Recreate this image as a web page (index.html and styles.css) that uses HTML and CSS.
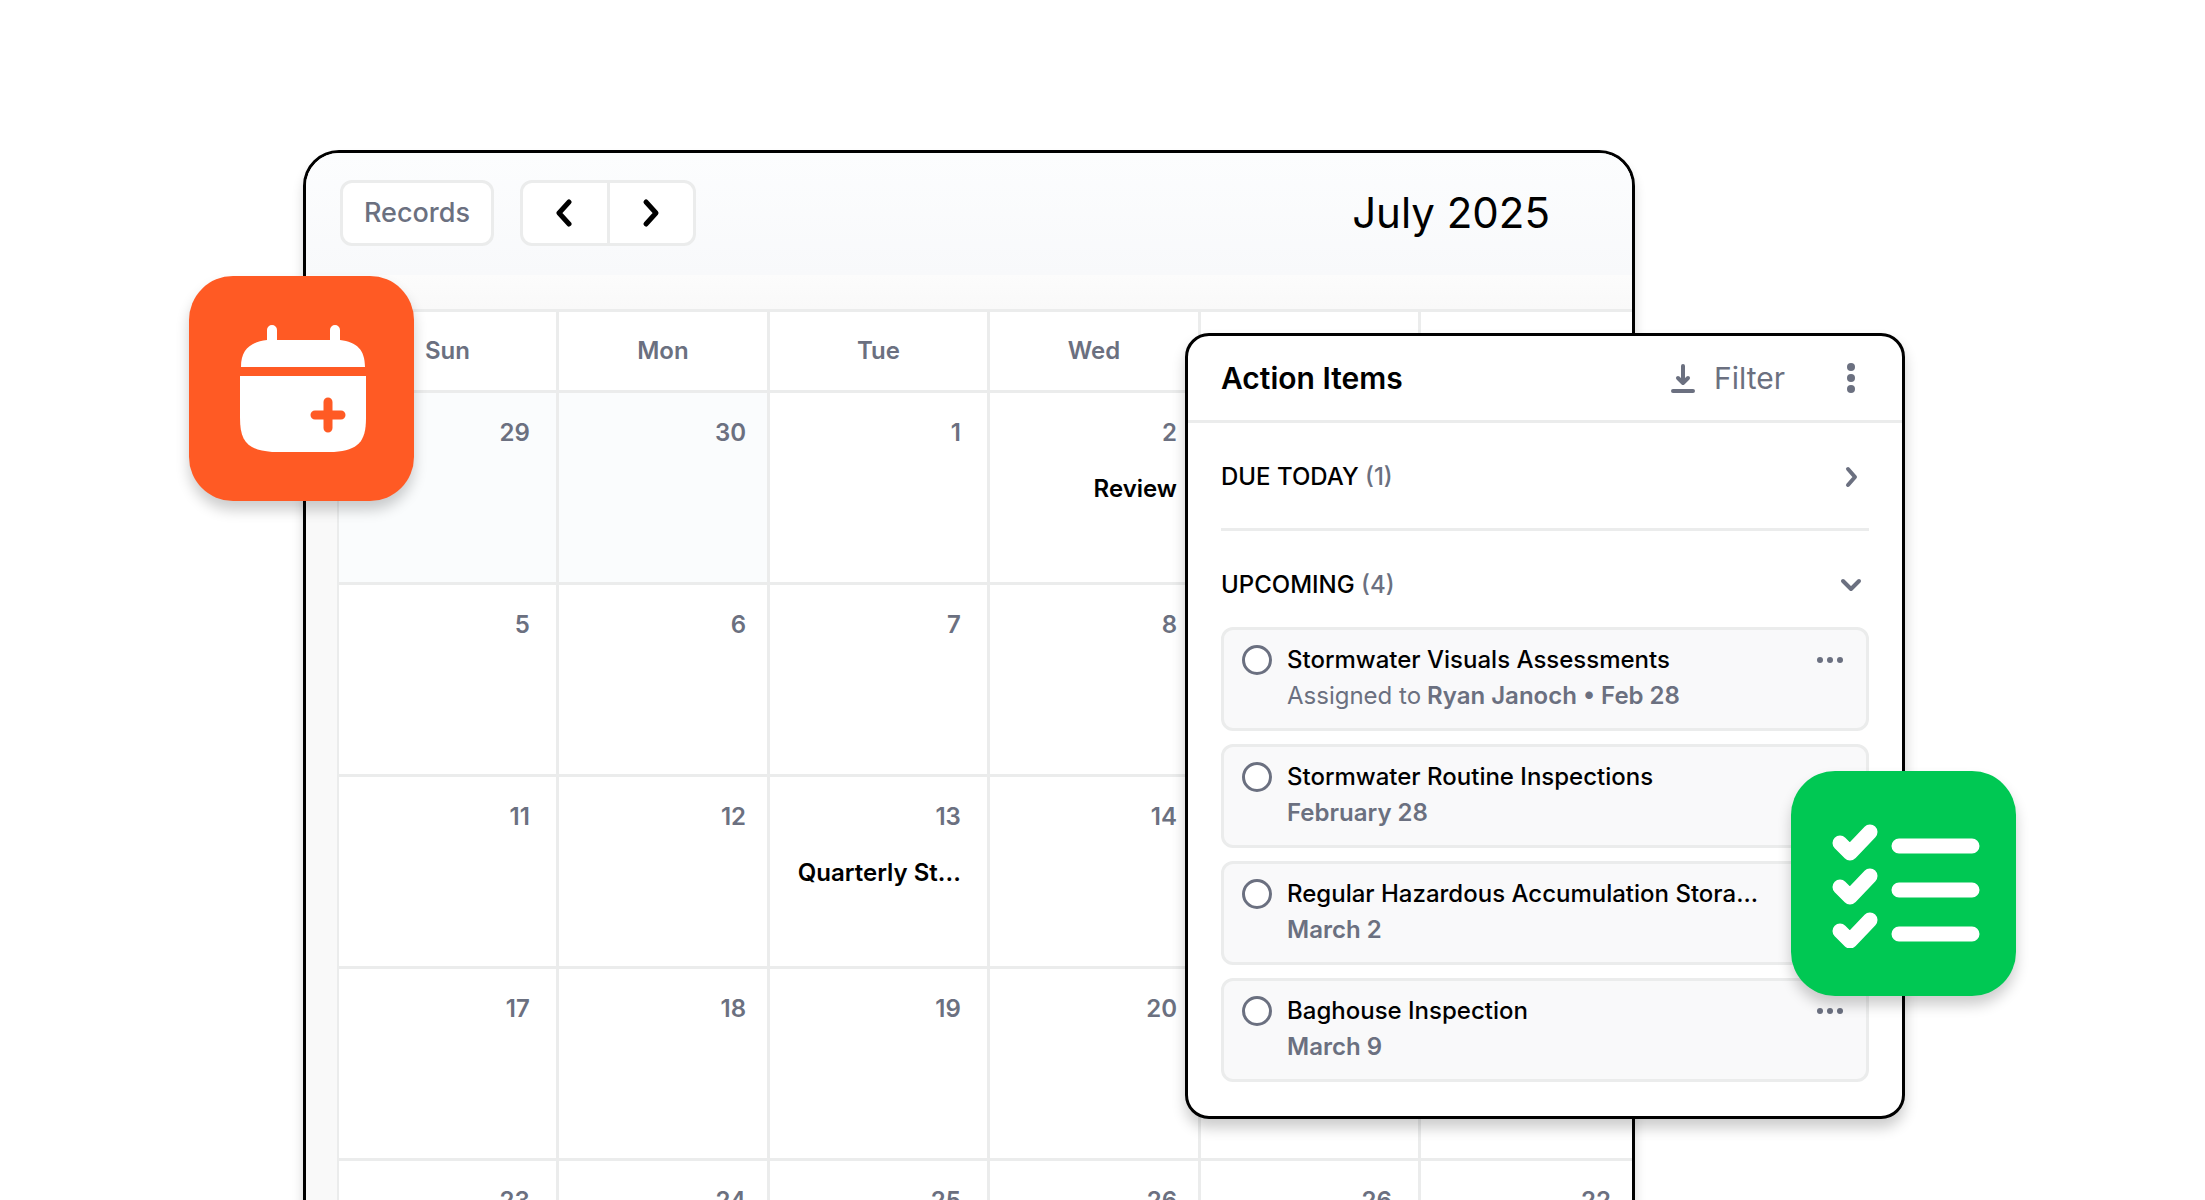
FILE: index.html
```html
<!DOCTYPE html>
<html lang="en">
<head>
<meta charset="utf-8">
<meta name="viewport" content="width=device-width, initial-scale=1">
<title>Calendar and action items</title>
<link rel="stylesheet" href="styles.css">
</head>
<body>
<main class="stage">
  <section class="calendar" aria-label="Calendar">
    <header class="calendar-bar">
      <button class="btn" type="button">Records</button>
      <div class="pager">
        <button class="pager-btn" type="button" aria-label="Previous month">
          <svg width="18" height="30" viewBox="0 0 18 30"><path d="M13 4 3 15l10 11"/></svg>
        </button>
        <button class="pager-btn" type="button" aria-label="Next month">
          <svg width="18" height="30" viewBox="0 0 18 30"><path d="m4 4 10 11L4 26"/></svg>
        </button>
      </div>
      <h1 class="month">July 2025</h1>
    </header>
    <div class="calendar-body">
      <table class="grid">
        <colgroup><col class="col-wide"><col class="col"><col class="col-wide"><col class="col"><col class="col-wide"><col class="col"></colgroup>
        <thead>
          <tr><th>Sun</th><th>Mon</th><th>Tue</th><th>Wed</th><td></td><td></td></tr>
        </thead>
        <tbody>
          <tr><td class="muted">29</td><td class="muted">30</td><td>1</td><td>2<p class="event">Review</p></td><td></td><td></td></tr>
          <tr><td>5</td><td>6</td><td>7</td><td>8</td><td></td><td></td></tr>
          <tr><td>11</td><td>12</td><td>13<p class="event">Quarterly St...</p></td><td>14</td><td></td><td></td></tr>
          <tr><td>17</td><td>18</td><td>19</td><td>20</td><td></td><td></td></tr>
          <tr><td>23</td><td>24</td><td>25</td><td>26</td><td>26</td><td>22</td></tr>
        </tbody>
      </table>
    </div>
    <div class="badge badge-calendar">
      <svg width="128" height="128" viewBox="0 0 128 128">
        <path fill="#fff" d="M29 15V5a5 5 0 0 1 10 0v10h53V5a5 5 0 0 1 10 0v10c17 2 25 10 25 27H3c0-17 9-25 26-27z"/>
        <path fill="#fff" d="M2 51h126v42c0 24-8 32-32 34H34C10 125 2 117 2 93z"/>
        <path fill="none" stroke="#ff5a24" stroke-width="9" stroke-linecap="round" d="M90 77v26M77 90h26"/>
      </svg>
    </div>
  </section>

  <section class="panel" aria-label="Action Items">
    <header class="panel-head">
      <h2 class="panel-title">Action Items</h2>
      <button class="filter" type="button">
        <svg width="26" height="30" viewBox="0 0 26 30"><path d="M13 3v17M8 15l5 5 5-5M3 28h20"/></svg>
        Filter
      </button>
      <button class="more" type="button" aria-label="More options">
        <svg width="8" height="30" viewBox="0 0 8 30"><circle cx="4" cy="4" r="4"/><circle cx="4" cy="15" r="4"/><circle cx="4" cy="26" r="4"/></svg>
      </button>
    </header>
    <div class="panel-body">
      <button class="group group-closed" type="button" aria-expanded="false">
        <span>DUE TODAY <span class="count">(1)</span></span>
        <svg width="24" height="24" viewBox="0 0 24 24"><path d="m9 4 7 8-7 8"/></svg>
      </button>
      <button class="group" type="button" aria-expanded="true">
        <span>UPCOMING <span class="count">(4)</span></span>
        <svg width="24" height="24" viewBox="0 0 24 24"><path d="m4 8 8 8 8-8"/></svg>
      </button>
      <ul class="items">
        <li class="item">
          <input class="tick" type="radio" id="item-1">
          <label class="item-text" for="item-1">Stormwater Visuals Assessments<span class="meta"><span class="light">Assigned to</span> Ryan Janoch • Feb 28</span></label>
          <button class="dots" type="button" aria-label="Item options"><svg width="26" height="6" viewBox="0 0 26 6"><circle cx="3" cy="3" r="3"/><circle cx="13" cy="3" r="3"/><circle cx="23" cy="3" r="3"/></svg></button>
        </li>
        <li class="item">
          <input class="tick" type="radio" id="item-2">
          <label class="item-text" for="item-2">Stormwater Routine Inspections<span class="meta">February 28</span></label>
        </li>
        <li class="item">
          <input class="tick" type="radio" id="item-3">
          <label class="item-text" for="item-3">Regular Hazardous Accumulation Stora...<span class="meta">March 2</span></label>
        </li>
        <li class="item">
          <input class="tick" type="radio" id="item-4">
          <label class="item-text" for="item-4">Baghouse Inspection<span class="meta">March 9</span></label>
          <button class="dots" type="button" aria-label="Item options"><svg width="26" height="6" viewBox="0 0 26 6"><circle cx="3" cy="3" r="3"/><circle cx="13" cy="3" r="3"/><circle cx="23" cy="3" r="3"/></svg></button>
        </li>
      </ul>
    </div>
    <div class="badge badge-tasks">
      <svg width="152" height="128" viewBox="0 0 152 128" fill="none" stroke="#fff" stroke-width="15" stroke-linecap="round" stroke-linejoin="round">
        <path d="M71 26h73M71 70h73M71 114h73"/>
        <path d="m12 23 10 10 20-21M12 67l10 10 20-21M12 111l10 10 20-21"/>
      </svg>
    </div>
  </section>
</main>
</body>
</html>
```
FILE: styles.css
```css
:root {
  --line: #ebecec;
  --gray: #6b7080;
  --ink: #000;
}

* {
  box-sizing: border-box;
}

body {
  margin: 0;
  background: #fff;
  color: var(--ink);
  font: 500 24px/36px Inter, sans-serif;
}

h1, h2, p, ul {
  margin: 0;
  padding: 0;
}

button {
  margin: 0;
  padding: 0;
  border: 0;
  background: none;
  color: inherit;
  font: inherit;
}

svg {
  display: block;
}

/* The calendar and the panel share one row and overlap across columns. */
.stage {
  display: grid;
  grid-template-columns: minmax(0, 303fr) minmax(0, 882fr) minmax(0, 450fr) minmax(0, 270fr) minmax(0, 300fr);
  align-items: start;
  height: 100vh;
  padding-top: 150px;
  overflow: hidden;
}

.calendar {
  position: relative;
  grid-row: 1;
  grid-column: 2 / 4;
  border: 3px solid var(--ink);
  border-radius: 36px;
  background: #f9f9f9;
  box-shadow: 0 9px 12px rgba(0, 0, 0, 0.16);
}

.calendar-bar {
  display: flex;
  align-items: center;
  height: 122px;
  padding: 0 82px 2px 34px;
  border-radius: 33px 33px 0 0;
  background: linear-gradient(#fcfdfe, #f8f9fb);
}

.btn,
.pager {
  height: 66px;
  border: 3px solid var(--line);
  border-radius: 12px;
  background: #fff;
}

.btn {
  width: 154px;
  color: var(--gray);
  font-size: 27px;
}

.pager {
  display: flex;
  width: 176px;
  margin-left: 26px;
}

.pager-btn {
  display: grid;
  flex: 1;
  place-items: center;
}

.pager-btn + .pager-btn {
  border-left: 3px solid var(--line);
}

.pager-btn path {
  fill: none;
  stroke: var(--ink);
  stroke-width: 5;
  stroke-linecap: round;
  stroke-linejoin: round;
}

.month {
  margin-left: auto;
  font-size: 42px;
  font-weight: 400;
}

.calendar-body {
  padding: 34px 0 0 31px;
  background: linear-gradient(#fcfcfc, #f9f9f9 34px);
}

.grid {
  width: 100%;
  border-collapse: separate;
  border-spacing: 0;
  table-layout: fixed;
  border-top: 3px solid var(--line);
  border-left: 2px solid var(--line);
  background: #fff;
  color: var(--gray);
  font-weight: 600;
}

.col-wide {
  width: 17%;
}

.grid th,
.grid td {
  padding: 0;
  border-right: 3px solid var(--line);
  border-bottom: 3px solid var(--line);
}

.grid tr > :last-child {
  border-right: 0;
}

.grid th {
  height: 81px;
  font-weight: 600;
}

.grid tbody td {
  height: 192px;
  padding: 22px 21px 0 0;
  text-align: right;
  vertical-align: top;
}

.grid tbody td:nth-child(odd) {
  padding-right: 26px;
}

.grid .muted {
  background: #fafcfd;
}

.event {
  margin-top: 20px;
  color: var(--ink);
}

.badge {
  position: absolute;
  display: grid;
  place-items: center;
  width: 225px;
  height: 225px;
  border-radius: 44px;
  box-shadow: 0 9px 14px rgba(0, 0, 0, 0.2);
}

.badge-calendar {
  top: 123px;
  left: -117px;
  background: #ff5a24;
}

.badge-tasks {
  top: 435px;
  right: -114px;
  background: #00c853;
}

.panel {
  position: relative;
  grid-row: 1;
  grid-column: 3 / 5;
  margin-top: 183px;
  border: 3px solid var(--ink);
  border-radius: 24px;
  background: #fff;
  box-shadow: 0 9px 14px rgba(0, 0, 0, 0.2);
}

.panel-head {
  display: flex;
  align-items: center;
  height: 87px;
  padding: 0 47px 0 33px;
  border-bottom: 3px solid var(--line);
  font-size: 30px;
}

.panel-title {
  margin-right: auto;
  font-size: 30px;
  font-weight: 600;
}

.filter {
  display: flex;
  align-items: center;
  gap: 18px;
  color: var(--gray);
  font-weight: 400;
}

.filter path,
.group path {
  fill: none;
  stroke: var(--gray);
  stroke-width: 4;
  stroke-linecap: round;
  stroke-linejoin: round;
}

.more {
  margin-left: 62px;
}

.more svg,
.dots svg {
  fill: var(--gray);
}

.panel-body {
  padding: 0 33px 34px;
}

.group {
  display: flex;
  align-items: center;
  justify-content: space-between;
  width: 100%;
  height: 96px;
  padding: 12px 6px 0 0;
}

.group-closed {
  height: 108px;
  padding-top: 2px;
  border-bottom: 3px solid var(--line);
}

.count {
  color: var(--gray);
}

.items {
  display: grid;
  gap: 13px;
  list-style: none;
}

.item {
  display: flex;
  align-items: flex-start;
  gap: 15px;
  height: 104px;
  padding: 12px 23px 0 18px;
  border: 3px solid var(--line);
  border-radius: 12px;
  background: #f9f9fa;
}

.tick {
  width: 30px;
  height: 30px;
  margin: 3px 0 0;
  appearance: none;
  border: 3px solid var(--gray);
  border-radius: 50%;
  background: #fff;
}

.item-text {
  flex: 1;
  font-optical-sizing: none;
}

.meta {
  display: block;
  color: var(--gray);
  font-weight: 600;
  font-optical-sizing: auto;
}

.light {
  font-weight: 400;
}

.dots {
  padding: 15px 0;
}
```
